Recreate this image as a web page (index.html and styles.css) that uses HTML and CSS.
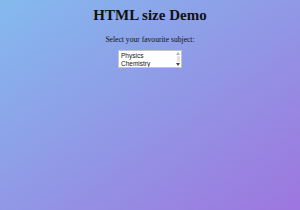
FILE: index.html
```html
<!DOCTYPE html>
<html lang="en">
<head>
<meta charset="UTF-8">
<meta name="viewport" content="width=device-width, initial-scale=1.0">
<title>HTML size Demo</title>
<link rel="stylesheet" href="styles.css">
</head>
<body>
<div class="page">
    <h1 class="title">HTML size Demo</h1>
    <p class="label">Select your favourite subject:</p>
    <div class="field">
        <div class="listbox">
            <select class="subjects" size="2">
                <option>Physics</option>
                <option>Chemistry</option>
                <option>Maths</option>
                <option>English</option>
            </select>
            <div class="scrollbar">
                <svg class="arrow" viewBox="0 0 4 3"><path d="M0 3L2 0L4 3z" fill="#b0b0b0"/></svg>
                <div class="thumb"></div>
                <svg class="arrow" viewBox="0 0 4 3"><path d="M0 0L2 3L4 0z" fill="#444"/></svg>
            </div>
        </div>
    </div>
</div>
</body>
</html>
```

FILE: styles.css
```css
html, body {
    margin: 0;
    padding: 0;
    height: 100%;
}

body {
    background: linear-gradient(to bottom right, #84baee, #9d76de);
    font-family: "Liberation Serif", "Times New Roman", serif;
    color: #111;
}

.page {
    text-align: center;
    padding-top: 7px;
}

.title {
    font-size: 15px;
    font-weight: bold;
    margin: 0 0 11px;
}

.label {
    font-size: 7.6px;
    margin: 0 0 6px;
}

.field {
    display: flex;
    justify-content: center;
}

.listbox {
    display: flex;
    width: 62px;
    height: 16px;
    border: 1px solid #c4c4c4;
    background: #fff;
}

.subjects {
    flex: 1;
    min-width: 0;
    font-family: "Liberation Sans", Arial, sans-serif;
    font-size: 6.5px;
    border: none;
    outline: none;
    background: transparent;
    padding: 1px 1px 0;
    overflow: hidden;
    color: #111;
}

.subjects option {
    padding: 0 1px;
    line-height: 7px;
}

.scrollbar {
    width: 6px;
    display: flex;
    flex-direction: column;
    align-items: center;
    justify-content: space-between;
    padding: 1px 0;
}

.arrow {
    width: 4px;
    height: 3px;
}

.thumb {
    width: 3px;
    flex: 1;
    margin: 1px 0;
    background: #e2e2e2;
    border-radius: 1px;
}
```
